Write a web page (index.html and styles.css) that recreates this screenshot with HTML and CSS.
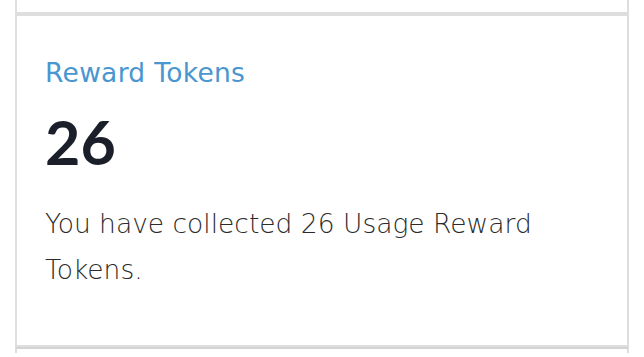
FILE: index.html
```html
<!DOCTYPE html>
<html lang="en">
<head>
    <meta charset="UTF-8">
    <meta name="viewport" content="width=device-width, initial-scale=1.0">
    <title>Reward Tokens</title>
    <link rel="stylesheet" href="styles.css">
</head>
<body>
    <div class="cards">
        <div class="card card-prev"></div>

        <div class="card">
            <h3 class="card-title">Reward Tokens</h3>
            <div class="card-value">26</div>
            <p class="card-text">You have collected 26 Usage Reward Tokens.</p>
        </div>

        <div class="card card-next"></div>
    </div>
</body>
</html>
```

FILE: styles.css
```css
body {
    font-family: 'DejaVu Sans', 'Open Sans', sans-serif;
    margin: 0;
    padding: 0 15px;
    background-color: #ffffff;
    color: #333333;
}

.cards {
    display: flex;
    flex-direction: column;
}

.card {
    border: 2px solid #dedede;
    background: #ffffff;
    padding: 41px 29px 52px 28px;
}

.card-prev {
    height: 12px;
    padding: 0;
    border-top: none;
}

.card-next {
    height: 4px;
    padding: 0;
    border-top-color: #d4d4d4;
    border-bottom: none;
}

.card-title {
    margin: 0;
    font-size: 26.5px;
    line-height: 32px;
    font-weight: 400;
    letter-spacing: 0.3px;
    color: #4a96d0;
}

.card-value {
    margin-top: 17px;
    font-family: 'Lato', sans-serif;
    font-size: 61px;
    line-height: 72px;
    font-weight: 700;
    color: #1b1f2a;
}

.card-text {
    margin: 23px 0 0 0;
    font-size: 26.5px;
    line-height: 46px;
    font-weight: 200;
    color: #2b2b2b;
}
```
